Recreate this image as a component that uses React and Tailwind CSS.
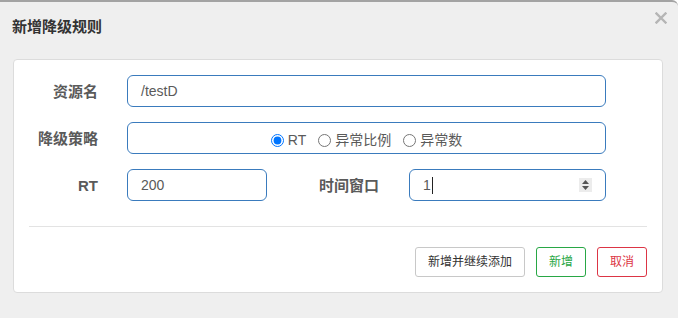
export default function App() {
    const font = { fontFamily: '"Liberation Sans", "Noto Sans CJK SC", sans-serif' };

    return (
        <div
            className="w-[678px] h-[318px] bg-[#efefef] border-t-2 border-[#a3a3a3] rounded-tr-[6px] overflow-hidden"
            style={font}
        >
            {/* Header */}
            <div className="flex items-start justify-between h-[57px] pl-[12px] pr-[11px]">
                <h3 className="mt-[16px] text-[15px] leading-[18px] font-bold text-[#333]">新增降级规则</h3>
                <button className="mt-[10px] text-[#b5b5b5]">
                    <svg className="w-[12px] h-[12px]" viewBox="0 0 12 12" fill="none" stroke="currentColor" strokeWidth={2.4} strokeLinecap="square">
                        <path d="M1.5 1.5l9 9M10.5 1.5l-9 9" />
                    </svg>
                </button>
            </div>

            {/* Body card */}
            <div className="mx-[13px] w-[650px] bg-white border border-[#dcdcdc] rounded-[4px] pt-[15px] pb-[15px]">
                <div className="flex flex-col gap-[15px]">
                    <div className="flex items-center h-[32px]">
                        <label className="w-[84px] text-right text-[15px] font-bold text-[#5a5a5a] pt-[2px]">资源名</label>
                        <div className="ml-[29px] w-[479px] h-[32px] border border-[#3a7bbd] rounded-[6px] flex items-center px-[13px] text-[14px] text-[#5a5a5a]">
                            /testD
                        </div>
                    </div>

                    <div className="flex items-center h-[32px]">
                        <label className="w-[84px] text-right text-[15px] font-bold text-[#5a5a5a] pt-[2px]">降级策略</label>
                        <div className="ml-[29px] w-[479px] h-[32px] border border-[#3a7bbd] rounded-[6px] flex items-center justify-center text-[14px] text-[#5a5a5a] pt-[4px]">
                            <label className="flex items-center">
                                <input type="radio" name="grade" defaultChecked className="m-0 w-[13px] h-[13px]" />
                                <span className="ml-[4px]">RT</span>
                            </label>
                            <label className="flex items-center ml-[12px]">
                                <input type="radio" name="grade" className="m-0 w-[13px] h-[13px]" />
                                <span className="ml-[4px]">异常比例</span>
                            </label>
                            <label className="flex items-center ml-[12px]">
                                <input type="radio" name="grade" className="m-0 w-[13px] h-[13px]" />
                                <span className="ml-[4px]">异常数</span>
                            </label>
                        </div>
                    </div>

                    <div className="flex items-center h-[32px]">
                        <label className="w-[84px] text-right text-[15px] font-bold text-[#5a5a5a] pt-[2px]">RT</label>
                        <div className="ml-[29px] w-[140px] h-[32px] border border-[#3a7bbd] rounded-[6px] flex items-center px-[13px] text-[14px] text-[#5a5a5a]">
                            200
                        </div>
                        <label className="w-[112px] text-right text-[15px] font-bold text-[#5a5a5a] pt-[2px]">时间窗口</label>
                        <div className="ml-[30px] w-[197px] h-[32px] border border-[#3a7bbd] rounded-[6px] flex items-center pl-[13px] pr-[13px] text-[14px] text-[#5a5a5a]">
                            <span>1</span>
                            <span className="w-px h-[17px] bg-[#222] ml-[1px]" />
                            <span className="ml-auto w-[13px] h-[14px] bg-[#ececec] flex flex-col items-center justify-center gap-[2px]">
                                <svg width="7" height="4" viewBox="0 0 7 4"><path d="M3.5 0L7 4H0z" fill="#555" /></svg>
                                <svg width="7" height="4" viewBox="0 0 7 4"><path d="M0 0h7L3.5 4z" fill="#555" /></svg>
                            </span>
                        </div>
                    </div>
                </div>

                <div className="mx-[15px] mt-[25px] h-px bg-[#e3e3e3]" />

                <div className="flex justify-end gap-[11px] pr-[15px] mt-[20px]">
                    <button className="h-[30px] px-[12px] border border-[#c8c8c8] rounded-[3px] text-[12px] text-[#333] bg-white">
                        新增并继续添加
                    </button>
                    <button className="h-[30px] px-[12px] border border-[#28a745] rounded-[3px] text-[12px] text-[#28a745] bg-white">
                        新增
                    </button>
                    <button className="h-[30px] px-[12px] border border-[#dc3545] rounded-[3px] text-[12px] text-[#dc3545] bg-white">
                        取消
                    </button>
                </div>
            </div>
        </div>
    );
}
